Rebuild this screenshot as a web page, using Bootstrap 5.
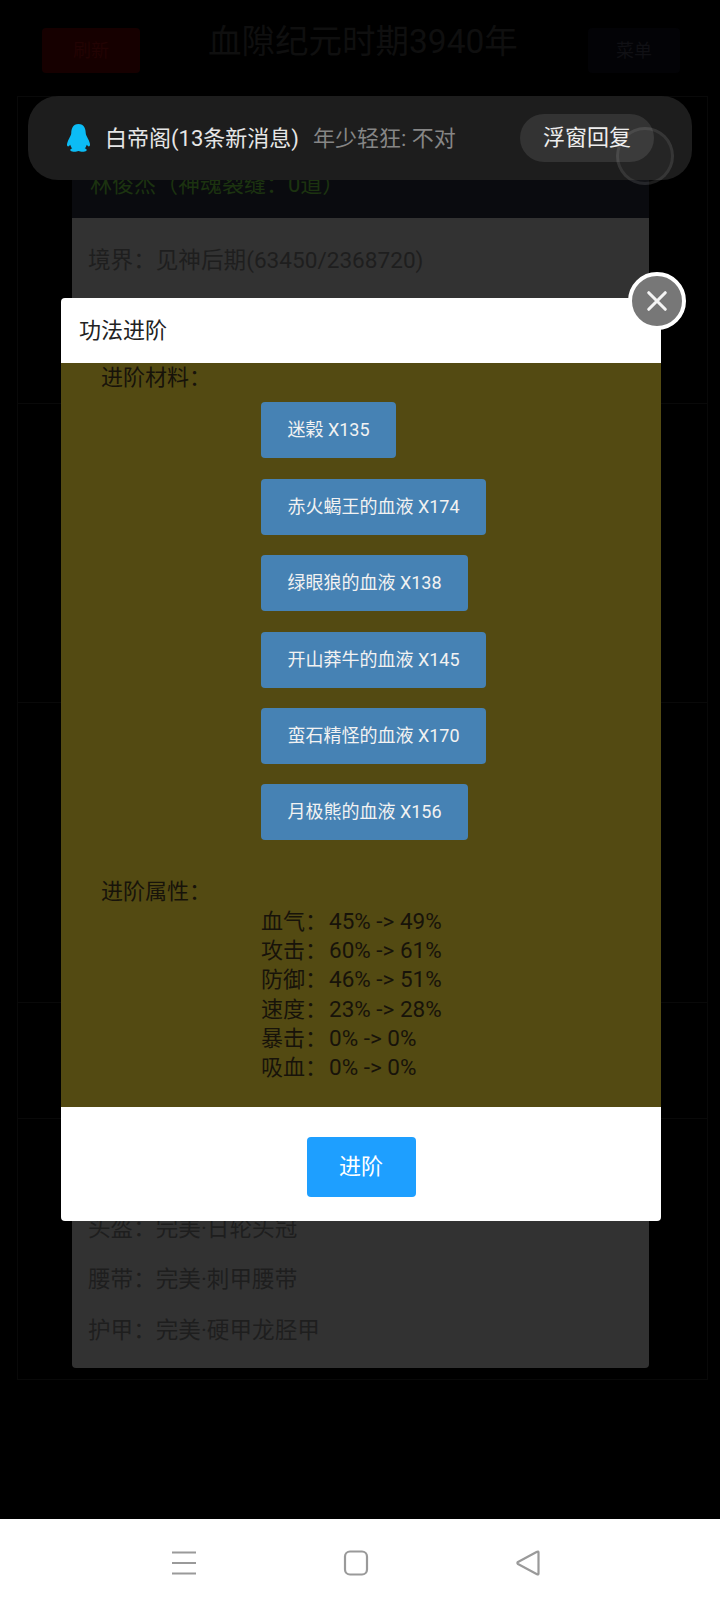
<!DOCTYPE html>
<html lang="zh-CN">
<head>
  <meta charset="UTF-8" />
  <meta name="viewport" content="width=device-width, initial-scale=1.0"/>
  <title>功法进阶</title>
  <link href="https://cdn.jsdelivr.net/npm/bootstrap@5.3.0/dist/css/bootstrap.min.css" rel="stylesheet" />
  <style>
    body {
      font-family: Roboto, "Noto Sans CJK SC", sans-serif;
      background: #000;
      width: 720px;
      height: 1607px;
      overflow: hidden;
      position: relative;
      margin: 0;
    }

    /* dimmed page behind the dialog */
    .page-top {
      height: 96px;
      padding: 28px 40px 23px 42px;
    }
    .top-red {
      width: 98px;
      height: 45px;
      background: #160000;
      color: #220303;
      font-size: 18px;
    }
    .top-title {
      color: #0f0f0f;
      font-size: 33.5px;
      line-height: 36px;
      margin: 0 0 18px 68px;
    }
    .top-side {
      width: 92px;
      height: 45px;
      background: #030306;
      color: #101014;
      font-size: 18px;
    }
    .page-frame {
      height: 1284px;
      margin: 0 12px 0 17px;
      padding: 30px 58px 0 54px;
      border: 1px solid #090909;
      background:
        linear-gradient(#090909, #090909) 0 306px / 100% 1px no-repeat,
        linear-gradient(#090909, #090909) 0 605px / 100% 1px no-repeat,
        linear-gradient(#090909, #090909) 0 905px / 100% 1px no-repeat,
        linear-gradient(#090909, #090909) 0 1021px / 100% 1px no-repeat;
    }
    .role-panel {
      height: 1241px;
      border-radius: 4px;
      overflow: hidden;
    }
    .role-head {
      height: 91px;
      background: #0a0b0f;
      color: #1c3310;
      font-size: 22px;
      padding: 0 18px 17px;
    }
    .role-body {
      background: #323232;
      color: #1e1e1e;
      font-size: 22.6px;
      padding: 17px 16px 12px;
    }
    .role-line {
      height: 51px;
      line-height: 51px;
    }

    /* qq notification on top */
    .qq-toast {
      position: absolute;
      left: 28px;
      top: 96px;
      width: 664px;
      height: 84px;
      background: #1d1d1d;
      border-radius: 30px;
      padding: 0 38px 0 38px;
      font-size: 22px;
      z-index: 5;
    }
    .qq-icon {
      width: 25px;
      height: 28px;
      margin-right: 14px;
    }
    .qq-from { color: #e6e6e6; }
    .qq-msg { color: #868686; margin-left: 14px; }
    .qq-reply {
      width: 134px;
      height: 48px;
      line-height: 48px;
      background: #333;
      color: #eee;
      font-size: 22px;
      padding: 0;
      border: 0;
      border-radius: 24px;
    }
    .float-ball {
      position: absolute;
      left: 616px;
      top: 127px;
      width: 58px;
      height: 58px;
      border-radius: 50%;
      border: 3px solid rgba(255, 255, 255, .08);
      background: rgba(255, 255, 255, .04);
      z-index: 6;
    }

    /* dialog */
    .skill-dialog {
      position: absolute;
      left: 61px;
      top: 298px;
      width: 600px;
      z-index: 10;
    }
    .skill-dialog .modal-content {
      background: #fff;
      border: 0;
      border-radius: 4px;
      overflow: hidden;
    }
    .skill-dialog .modal-header {
      height: 65px;
      padding: 0 18px;
      border: 0;
    }
    .skill-dialog .modal-title {
      font-size: 22px;
      color: #222;
    }
    .skill-dialog .modal-body {
      background: #534a12;
      color: #17130a;
      padding: 0 0 24px 40px;
      font-size: 22px;
      line-height: 29.33px;
    }
    .mat-list {
      padding-left: 160px;
      margin: 10px 0 37px;
      gap: 20.4px;
    }
    .mat-btn {
      height: 56px;
      line-height: 56px;
      padding: 0 26.5px;
      background: #4682b4;
      border: 0;
      border-radius: 4px;
      color: #f2f2f2;
      font-size: 18px;
    }
    .attr-list {
      padding-left: 160px;
    }
    .attr-name {
      width: 68px;
    }
    .attr-val {
      font-size: 22.5px;
    }
    .skill-dialog .modal-footer {
      height: 114px;
      padding: 6px 0 0;
      border: 0;
    }
    .go-btn {
      width: 109px;
      height: 60px;
      background: #1e9fff;
      border: 0;
      border-radius: 4px;
      color: #fff;
      font-size: 22px;
      margin: 0;
    }
    .close-ball {
      position: absolute;
      left: 628px;
      top: 272px;
      width: 58px;
      height: 58px;
      border: 4px solid #fff;
      border-radius: 50%;
      background: #777;
      padding: 0;
      z-index: 11;
    }

    /* android nav bar */
    .nav-keys {
      position: absolute;
      left: 0;
      right: 0;
      bottom: 0;
      height: 88px;
      background: #fff;
    }
    .nav-key {
      width: 26px;
      height: 26px;
    }
    .nav-keys .key-menu { margin-left: 171px; }
    .nav-keys .key-home { margin-left: 146px; }
    .nav-keys .key-back { margin-left: 146px; }
  </style>
</head>
<body>

  <div class="page-top d-flex align-items-center">
    <div class="top-red d-flex align-items-center justify-content-center rounded-1">刷新</div>
    <div class="top-title flex-grow-1">血隙纪元时期3940年</div>
    <div class="top-side d-flex align-items-center justify-content-center rounded-1">菜单</div>
  </div>

  <div class="page-frame">
    <div class="role-panel d-flex flex-column">
      <div class="role-head d-flex align-items-end">林俊杰（神魂裂缝：0道）</div>
      <div class="role-body flex-grow-1 d-flex flex-column">
        <div class="role-line">境界：见神后期(63450/2368720)</div>
        <div class="mt-auto">
          <div class="role-line">头盔：完美·日轮头冠</div>
          <div class="role-line">腰带：完美·刺甲腰带</div>
          <div class="role-line">护甲：完美·硬甲龙胫甲</div>
        </div>
      </div>
    </div>
  </div>

  <!-- QQ notification -->
  <div class="qq-toast d-flex align-items-center">
    <svg class="qq-icon flex-shrink-0" viewBox="0 0 24 27">
      <path fill="#0cbcf5" d="M12 0C6.5 0 5 5 5 9c0 2-1.500 3.500-3 7-1.300 3-1.500 5-.5 5.500 1 .5 2-1 2.500-1.500.5 1.500 1 2.700 2 3.500-1.500.5-2.500 1.500-1.500 2.500 1.500 1 5.500 1 7.500 0 2 1 6 1 7.500 0 1-1 0-2-1.500-2.500 1-.8 1.500-2 2-3.500.5.500 1.500 2 2.500 1.500 1-.5.8-2.500-.5-5.500-1.500-3.500-3-5-3-7 0-4-1.500-9-7-9z"/>
    </svg>
    <span class="qq-from">白帝阁(13条新消息)</span>
    <span class="qq-msg">年少轻狂: 不对</span>
    <button type="button" class="btn qq-reply ms-auto">浮窗回复</button>
  </div>
  <div class="float-ball"></div>

  <!-- Dialog -->
  <div class="skill-dialog">
    <div class="modal-content">
      <div class="modal-header">
        <div class="modal-title">功法进阶</div>
      </div>
      <div class="modal-body">
        <div>进阶材料：</div>
        <div class="mat-list d-flex flex-column align-items-start">
          <button type="button" class="btn mat-btn">迷榖 X135</button>
          <button type="button" class="btn mat-btn">赤火蝎王的血液 X174</button>
          <button type="button" class="btn mat-btn">绿眼狼的血液 X138</button>
          <button type="button" class="btn mat-btn">开山莽牛的血液 X145</button>
          <button type="button" class="btn mat-btn">蛮石精怪的血液 X170</button>
          <button type="button" class="btn mat-btn">月极熊的血液 X156</button>
        </div>
        <div>进阶属性：</div>
        <div class="attr-list">
          <div class="d-flex"><span class="attr-name">血气：</span><span class="attr-val">45% -&gt; 49%</span></div>
          <div class="d-flex"><span class="attr-name">攻击：</span><span class="attr-val">60% -&gt; 61%</span></div>
          <div class="d-flex"><span class="attr-name">防御：</span><span class="attr-val">46% -&gt; 51%</span></div>
          <div class="d-flex"><span class="attr-name">速度：</span><span class="attr-val">23% -&gt; 28%</span></div>
          <div class="d-flex"><span class="attr-name">暴击：</span><span class="attr-val">0% -&gt; 0%</span></div>
          <div class="d-flex"><span class="attr-name">吸血：</span><span class="attr-val">0% -&gt; 0%</span></div>
        </div>
      </div>
      <div class="modal-footer justify-content-center">
        <button type="button" class="btn go-btn">进阶</button>
      </div>
    </div>
  </div>
  <button type="button" class="close-ball d-flex align-items-center justify-content-center" aria-label="关闭">
    <svg width="22" height="22" viewBox="0 0 24 24">
      <path d="M3 3L21 21M21 3L3 21" stroke="#f4f4f4" stroke-width="3.400" stroke-linecap="round" fill="none"/>
    </svg>
  </button>

  <!-- Nav keys -->
  <div class="nav-keys d-flex align-items-center">
    <svg class="nav-key key-menu" viewBox="0 0 26 26">
      <path d="M1 2.500H25M1 13H25M1 23.500H25" stroke="#9a9a9a" stroke-width="2.200" fill="none"/>
    </svg>
    <svg class="nav-key key-home" viewBox="0 0 26 26">
      <rect x="2" y="1.500" width="22" height="23" rx="5" stroke="#9a9a9a" stroke-width="2.200" fill="none"/>
    </svg>
    <svg class="nav-key key-back" viewBox="0 0 26 26">
      <path d="M23.500 2.500C23.500 1.500 22.800 1.200 22 1.800L3 12C2.200 12.600 2.200 13.400 3 14L22 24.200C22.800 24.800 23.500 24.500 23.500 23.500Z" stroke="#9a9a9a" stroke-width="2.200" stroke-linejoin="round" fill="none"/>
    </svg>
  </div>

</body>
</html>
